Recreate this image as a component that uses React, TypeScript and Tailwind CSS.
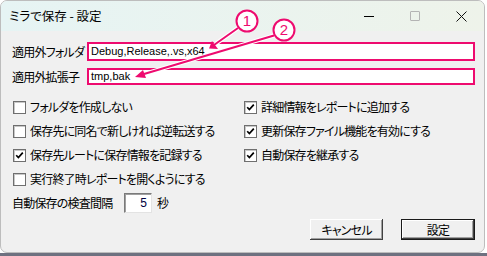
import React from 'react'

const PINK = '#ee0b6f'

function Check({ checked }: { checked: boolean }) {
  return (
    <span className="w-[13px] h-[13px] shrink-0 bg-white border border-[#6f6f6f] shadow-[inset_1px_1px_0_#c8c8c8] flex items-center justify-center">
      {checked && (
        <svg width="9" height="9" viewBox="0 0 9 9">
          <path d="M1.2 4.2 L3.4 6.6 L7.8 1.6" stroke="#000" strokeWidth="1.7" fill="none" />
        </svg>
      )}
    </span>
  )
}

function Option({ label, checked }: { label: string; checked: boolean }) {
  return (
    <div className="flex items-center gap-[4px] h-[24px]">
      <Check checked={checked} />
      <span className="whitespace-nowrap">{label}</span>
    </div>
  )
}

function Annotations() {
  return (
    <svg className="absolute inset-0 pointer-events-none" width="487" height="256" viewBox="0 0 487 256">
      {/* arrow 1 */}
      <line x1="238" y1="28" x2="214" y2="45" stroke="#fff" strokeWidth="4" />
      <line x1="238" y1="28" x2="214" y2="45" stroke={PINK} strokeWidth="2" />
      <polygon points="209,48.5 212,41 218,49" fill={PINK} />
      {/* arrow 2 */}
      <line x1="274" y1="35.5" x2="144" y2="74" stroke="#fff" strokeWidth="4" />
      <line x1="274" y1="35.5" x2="144" y2="74" stroke={PINK} strokeWidth="2" />
      <polygon points="135,77 143,70 146,78" fill={PINK} />
      <circle cx="247" cy="21" r="10.5" fill="#fff" stroke={PINK} strokeWidth="2" />
      <text x="247" y="26" textAnchor="middle" fontSize="15" fill={PINK} fontFamily="Liberation Sans, sans-serif">1</text>
      <circle cx="284" cy="30" r="10.5" fill="#fff" stroke={PINK} strokeWidth="2" />
      <text x="284" y="35" textAnchor="middle" fontSize="15" fill={PINK} fontFamily="Liberation Sans, sans-serif">2</text>
    </svg>
  )
}

export default function App() {
  const btn =
    'h-[21px] flex items-center justify-center bg-[#f0f0f0] shadow-[inset_-1px_-1px_#404040,inset_1px_1px_#ffffff,inset_-2px_-2px_#a0a0a0]'

  return (
    <div className="relative w-[487px] h-[256px] overflow-hidden bg-white flex flex-col text-[12px] text-black font-['Noto_Sans_CJK_JP',sans-serif] [font-feature-settings:'palt'] leading-none">
      <div className="h-[253px] shrink-0">
        <div className="w-[485px] h-[253px] border border-[#bdbdbd] rounded-[7px] overflow-hidden bg-[#f0f0f0] flex flex-col">
          {/* Title bar */}
          <div className="h-[30px] shrink-0 flex items-center bg-gradient-to-r from-[#e6f4f4] to-[#eef3ea]">
            <span className="pl-[8px] text-[12.5px] flex-1 whitespace-nowrap">ミラで保存 - 設定</span>
            <div className="flex h-full">
              <div className="w-[46px] flex items-center justify-center">
                <span className="w-[10px] h-[1px] bg-black" />
              </div>
              <div className="w-[46px] flex items-center justify-center">
                <span className="w-[10px] h-[10px] border border-[#b4b4b4] rounded-[1px]" />
              </div>
              <div className="w-[46px] flex items-center justify-center">
                <svg width="11" height="11" viewBox="0 0 11 11">
                  <path d="M0.5 0.5 L10.5 10.5 M10.5 0.5 L0.5 10.5" stroke="#111" strokeWidth="1" />
                </svg>
              </div>
            </div>
          </div>

          {/* Client */}
          <div className="flex-1 flex flex-col pl-[11px] pr-[9px] tracking-[-0.8px]">
            <div className="mt-[11px] flex items-center">
              <span className="w-[75px] whitespace-nowrap">適用外フォルダ</span>
              <div className="w-[388px] h-[19px] bg-white border-2 border-[#ee0b6f] flex items-center pl-[2px] font-['Liberation_Sans',sans-serif] text-[11px] tracking-normal">
                Debug,Release,.vs,x64
              </div>
            </div>
            <div className="mt-[7px] flex items-center">
              <span className="w-[75px] whitespace-nowrap">適用外拡張子</span>
              <div className="w-[388px] h-[17px] bg-white border-2 border-[#ee0b6f] flex items-center pl-[2px] font-['Liberation_Sans',sans-serif] text-[11px] tracking-normal">
                tmp,bak
              </div>
            </div>

            <div className="mt-[10px] ml-[1px] grid grid-cols-[231px_1fr]">
              <Option label="フォルダを作成しない" checked={false} />
              <Option label="詳細情報をレポートに追加する" checked />
              <Option label="保存先に同名で新しければ逆転送する" checked={false} />
              <Option label="更新保存ファイル機能を有効にする" checked />
              <Option label="保存先ルートに保存情報を記録する" checked />
              <Option label="自動保存を継承する" checked />
              <Option label="実行終了時レポートを開くようにする" checked={false} />
              <div />
            </div>

            <div className="h-[24px] flex items-center">
              <span className="w-[112px] whitespace-nowrap">自動保存の検査間隔</span>
              <div className="w-[28px] h-[20px] bg-white border-t border-l border-[#7a7a7a] border-r border-b border-r-[#e3e3e3] border-b-[#e3e3e3] shadow-[inset_1px_1px_#a0a0a0] flex items-center justify-end pr-[4px] font-['Liberation_Sans',sans-serif] text-[12px] tracking-normal text-[#000040]">
                5
              </div>
              <span className="ml-[5px]">秒</span>
            </div>

            <div className="mt-[4px] flex justify-end gap-[18px]">
              <button className={`${btn} w-[73px]`}>キャンセル</button>
              <button className={`${btn} w-[74px] border border-[#1a1a1a]`}>設定</button>
            </div>
          </div>
        </div>
      </div>
      <div className="flex-1 bg-[#6e7180]" />
      <Annotations />
    </div>
  )
}
